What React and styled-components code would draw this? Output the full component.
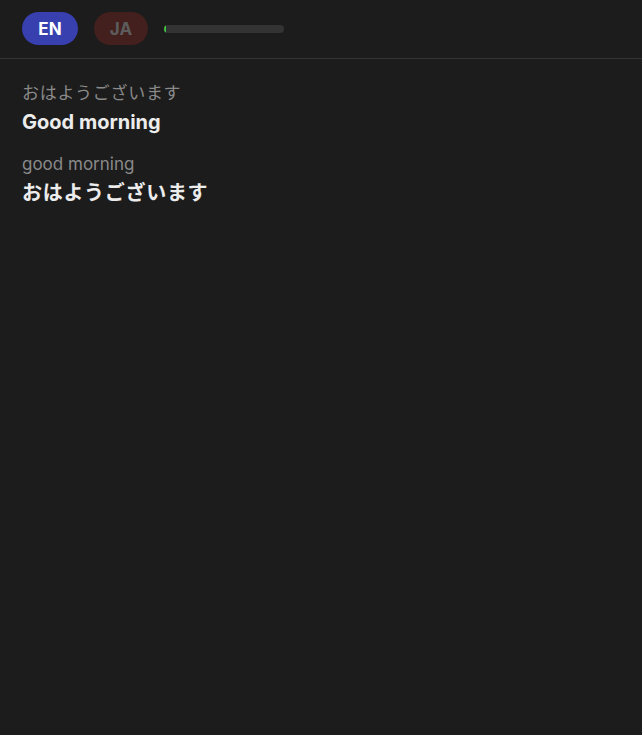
import React from "react";
import styled, { createGlobalStyle } from "styled-components";

const Global = createGlobalStyle`
  html, body { margin: 0; padding: 0; background: #1c1c1c; }
  body { font-family: Inter, "Noto Sans CJK JP", sans-serif; min-height: 735px; }
`;

const Page = styled.div`
  min-height: 735px;
  background: #1c1c1c;
`;

const Header = styled.header`
  display: flex;
  align-items: center;
  gap: 16px;
  height: 59px;
  padding: 0 22px 1px;
  box-sizing: border-box;
  border-bottom: 1px solid #333;
`;

const Pill = styled.button`
  height: 33px;
  width: ${(p) => p.$w}px;
  border: none;
  border-radius: 17px;
  background: ${(p) => (p.$active ? "#383fae" : "#43201e")};
  color: ${(p) => (p.$active ? "#ffffff" : "#5c5c5c")};
  font-family: Inter, sans-serif;
  font-weight: 700;
  font-size: 17px;
  padding: 0;
  display: flex;
  align-items: center;
  justify-content: center;
`;

const Track = styled.div`
  width: 120px;
  height: 8px;
  border-radius: 4px;
  background: #333;
  overflow: hidden;
  display: flex;
`;

const Fill = styled.div`
  height: 100%;
  background: #3fbf3f;
`;

const Content = styled.main`
  display: flex;
  flex-direction: column;
  gap: 13px;
  padding: 21px 22px;
`;

const Entry = styled.div`
  display: flex;
  flex-direction: column;
`;

const Source = styled.div`
  font-size: 17px;
  line-height: 26px;
  color: #8a8a8a;
  letter-spacing: ${(p) => (p.$ja ? "0.7px" : "0")};
  font-family: Inter, "Noto Sans CJK JP", sans-serif;
`;

const Target = styled.div`
  font-size: 20px;
  line-height: 32px;
  font-weight: 700;
  color: #ececec;
  letter-spacing: ${(p) => (p.$ja ? "0.7px" : "0")};
  font-family: Inter, "Noto Sans CJK JP", sans-serif;
`;

const entries = [
  { src: "おはようございます", srcJa: true, dst: "Good morning", dstJa: false },
  { src: "good morning", srcJa: false, dst: "おはようございます", dstJa: true },
];

export default function App() {
  return (
    <Page>
      <Global />
      <Header>
        <Pill $active $w={56}>EN</Pill>
        <Pill $w={54}>JA</Pill>
        <Track>
          <Fill style={{ width: "2px" }} />
        </Track>
      </Header>
      <Content>
        {entries.map((e, i) => (
          <Entry key={i}>
            <Source $ja={e.srcJa}>{e.src}</Source>
            <Target $ja={e.dstJa}>{e.dst}</Target>
          </Entry>
        ))}
      </Content>
    </Page>
  );
}
